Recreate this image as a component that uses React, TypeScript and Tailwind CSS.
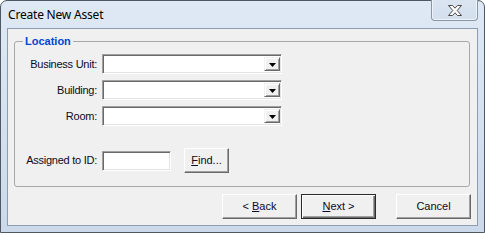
import React from "react";

function Combo() {
  return (
    <div className="flex h-[20px] w-[180px] border border-t-[#a0a0a0] border-l-[#a0a0a0] border-r-white border-b-white bg-white shadow-[inset_1px_1px_0_#696969,inset_-1px_-1px_0_#e3e3e3]">
      <div className="flex-1" />
      <div className="mt-[2px] mb-[2px] mr-[1px] flex w-[16px] items-center justify-center bg-[#f0f0f0] border border-t-[#f0f0f0] border-l-[#f0f0f0] border-r-[#696969] border-b-[#696969] shadow-[inset_1px_1px_0_#fff,inset_-1px_-1px_0_#a0a0a0]">
        <svg width="7" height="4" viewBox="0 0 7 4" className="mt-[1px]">
          <path d="M0 0H7L3.5 4Z" fill="#000" />
        </svg>
      </div>
    </div>
  );
}

function Row({ label }: { label: string }) {
  return (
    <div className="flex h-[20px] items-center gap-[5px]">
      <div className="w-[82px] text-right tracking-[-0.25px]">{label}</div>
      <Combo />
    </div>
  );
}

function Btn({
  children,
  def,
  w = "w-[75px]",
}: {
  children: React.ReactNode;
  def?: boolean;
  w?: string;
}) {
  return (
    <div
      className={
        def
          ? `${w} flex h-[25px] items-center justify-center bg-[#f0f0f0] border border-[#2a2a2a] shadow-[inset_1px_1px_0_#fff,inset_-1px_-1px_0_#696969,inset_-2px_-2px_0_#a0a0a0]`
          : `${w} flex h-[25px] items-center justify-center bg-[#f0f0f0] border border-t-white border-l-white border-r-[#696969] border-b-[#696969] shadow-[inset_-1px_-1px_0_#a0a0a0]`
      }
    >
      {children}
    </div>
  );
}

export default function App() {
  return (
    <div className="h-[233px] w-[485px] bg-white">
      <div className="flex h-[233px] w-[485px] flex-col rounded-t-[7px] border border-[#4e5963] bg-gradient-to-b from-[#dfe9f5] to-[#cbd9ea] font-['Liberation_Sans',sans-serif] text-[11px] leading-[13px] text-[#0a0a1e]">
        <div className="flex h-[27px] items-start justify-between">
          <div className="pl-[7px] pt-[6px] font-['Noto_Sans',sans-serif] text-[12px] leading-[15px] tracking-[-0.2px] text-black">
            Create New Asset
          </div>
          <div className="mr-[6px] -mt-[1px] flex h-[21px] w-[47px] items-center justify-center rounded-b-[4px] border border-t-0 border-[#8896a8] bg-gradient-to-b from-[#dbe5f1] to-[#d3dfee] shadow-[inset_1px_0_0_#eef3f9,inset_-1px_0_0_#eef3f9,inset_0_-1px_0_#eef3f9]">
            <svg width="14" height="11" viewBox="0 0 14 11" className="mt-[1px]">
              <path
                d="M0.5 0.5H4.5L7 3.2L9.5 0.5H13.5L9.2 5.5L13.5 10.5H9.5L7 7.8L4.5 10.5H0.5L4.8 5.5Z"
                fill="#fff"
                stroke="#4a4a4a"
                strokeWidth="1"
                strokeLinejoin="round"
              />
            </svg>
          </div>
        </div>
        <div className="ml-[6px] flex h-[198px] w-[471px] flex-col border border-[#8c9db2] bg-[#f0f0f0] pl-[6px] pt-[6px]">
          <fieldset className="w-[456px] rounded-[3px] border border-[#a8a8a8] pb-[13px] pt-[6px]">
            <legend className="ml-[8px] px-[2px] text-[11px] font-bold leading-[13px] text-[#0046d5]">
              Location
            </legend>
            <div className="flex flex-col gap-[6px]">
              <Row label="Business Unit:" />
              <Row label="Building:" />
              <Row label="Room:" />
            </div>
            <div className="mt-[22px] flex h-[25px] items-center">
              <div className="w-[82px] text-right tracking-[-0.25px]">Assigned to ID:</div>
              <div className="ml-[5px] h-[20px] w-[69px] border border-t-[#a0a0a0] border-l-[#a0a0a0] border-r-white border-b-white bg-white shadow-[inset_1px_1px_0_#696969,inset_-1px_-1px_0_#e3e3e3]" />
              <div className="ml-[13px]">
                <Btn w="w-[45px]">
                  <span>
                    <span className="underline">F</span>ind...
                  </span>
                </Btn>
              </div>
            </div>
          </fieldset>
          <div className="mt-[7px] flex pl-[208px]">
            <Btn>
              <span>
                &lt; <span className="underline">B</span>ack
              </span>
            </Btn>
            <div className="ml-[4px]">
              <Btn def>
                <span>
                  <span className="underline">N</span>ext &gt;
                </span>
              </Btn>
            </div>
            <div className="ml-[20px]">
              <Btn>Cancel</Btn>
            </div>
          </div>
        </div>
      </div>
    </div>
  );
}
